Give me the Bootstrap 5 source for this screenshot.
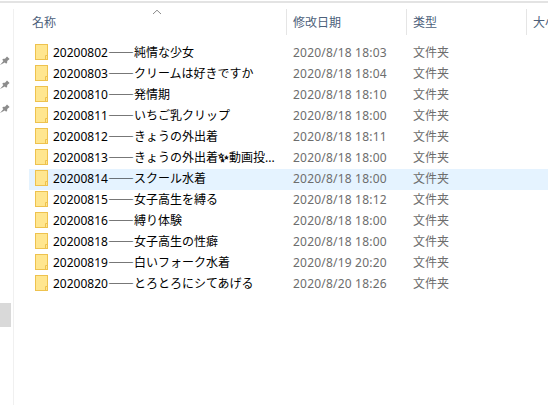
<!DOCTYPE html>
<html lang="ja">
<head>
<meta charset="utf-8">
<link href="https://cdn.jsdelivr.net/npm/bootstrap@5.3.0/dist/css/bootstrap.min.css" rel="stylesheet">
<style>
html,body{margin:0;height:405px;width:548px;overflow:hidden;background:#fff}
body{font-family:"Noto Sans","Noto Sans CJK JP",sans-serif;font-size:12px;line-height:19px;color:#000}
.topline{height:2px;margin-top:1px;background:#e3e3e3}
.shell{height:402px}
.rail{width:14px;border-right:1px solid #f0f0f0;margin-top:6px;flex:none}
.pins{width:13px;padding-top:46px;gap:14px}
.pins svg{width:10px;height:10px;display:block}
.thumb{width:11px;height:24px;background:#d9d9d9;margin-top:190px}
.pane{padding-top:6px;min-width:0;overflow:hidden}
.colhead{height:26px;color:#4c607a;padding-left:18px;position:relative}
.caret-up{position:absolute;left:138px;top:0;width:10px;height:6px}
.hname{width:254px;line-height:27px;flex:none}
.hcell{width:120px;border-left:1px solid #e5e5e5;padding-left:6px;line-height:27px;flex:none}
.rows{padding-top:8px;padding-left:15px}
.frow{height:21px;white-space:nowrap}
.frow.sel{background:#e5f3ff}
.fico{width:13px;height:16px;margin-left:6px;margin-top:1px;flex:none}
.fname{width:245px;padding-left:5px;overflow:hidden;flex:none}
.dash{font-family:"Noto Sans CJK JP",sans-serif;font-size:13px;line-height:1;font-weight:700}
.spark{font-family:"DejaVu Sans",sans-serif;font-size:13px;line-height:1;font-weight:700}
.fdate{width:120px;color:#6d6d6d;flex:none;letter-spacing:.2px}
.ftype{color:#6d6d6d;flex:none}
</style>
</head>
<body>
<div class="topline"></div>
<div class="shell d-flex">
  <div class="rail d-flex flex-column">
    <div class="pins d-flex flex-column">
      <svg viewBox="0 0 10 10"><path d="M0 10 3.4 6 2.2 4.8 3.4 3.8 5 3.8 7 1.4 9.6 4 7.2 6 7.2 7.6 6.2 8.8 4.8 7.4Z" fill="#8c8c8c"/></svg>
      <svg viewBox="0 0 10 10"><path d="M0 10 3.4 6 2.2 4.8 3.4 3.8 5 3.8 7 1.4 9.6 4 7.2 6 7.2 7.6 6.2 8.8 4.8 7.4Z" fill="#8c8c8c"/></svg>
      <svg viewBox="0 0 10 10"><path d="M0 10 3.4 6 2.2 4.8 3.4 3.8 5 3.8 7 1.4 9.6 4 7.2 6 7.2 7.6 6.2 8.8 4.8 7.4Z" fill="#8c8c8c"/></svg>
    </div>
    <div class="thumb"></div>
  </div>
  <div class="pane flex-grow-1">
    <div class="colhead d-flex">
      <svg class="caret-up" viewBox="0 0 10 6"><path d="M1 5 5 1.2 9 5" fill="none" stroke="#8a8a8a"/></svg>
      <div class="hname">名称</div>
      <div class="hcell">修改日期</div>
      <div class="hcell">类型</div>
      <div class="hcell">大小</div>
    </div>
    <div class="rows">
      <div class="frow d-flex"><svg class="fico" viewBox="0 0 13 16"><rect x=".5" y=".5" width="12" height="15" fill="#ffe68f" stroke="#eec24e"/><path d="M10.5 15.5v-4h2" fill="none" stroke="#eec24e"/></svg><div class="fname">20200802<span class="dash">——</span>純情な少女</div><div class="fdate">2020/8/18 18:03</div><div class="ftype">文件夹</div></div>
      <div class="frow d-flex"><svg class="fico" viewBox="0 0 13 16"><rect x=".5" y=".5" width="12" height="15" fill="#ffe68f" stroke="#eec24e"/><path d="M10.5 15.5v-4h2" fill="none" stroke="#eec24e"/></svg><div class="fname">20200803<span class="dash">——</span>クリームは好きですか</div><div class="fdate">2020/8/18 18:04</div><div class="ftype">文件夹</div></div>
      <div class="frow d-flex"><svg class="fico" viewBox="0 0 13 16"><rect x=".5" y=".5" width="12" height="15" fill="#ffe68f" stroke="#eec24e"/><path d="M10.5 15.5v-4h2" fill="none" stroke="#eec24e"/></svg><div class="fname">20200810<span class="dash">——</span>発情期</div><div class="fdate">2020/8/18 18:10</div><div class="ftype">文件夹</div></div>
      <div class="frow d-flex"><svg class="fico" viewBox="0 0 13 16"><rect x=".5" y=".5" width="12" height="15" fill="#ffe68f" stroke="#eec24e"/><path d="M10.5 15.5v-4h2" fill="none" stroke="#eec24e"/></svg><div class="fname">20200811<span class="dash">——</span>いちご乳クリップ</div><div class="fdate">2020/8/18 18:00</div><div class="ftype">文件夹</div></div>
      <div class="frow d-flex"><svg class="fico" viewBox="0 0 13 16"><rect x=".5" y=".5" width="12" height="15" fill="#ffe68f" stroke="#eec24e"/><path d="M10.5 15.5v-4h2" fill="none" stroke="#eec24e"/></svg><div class="fname">20200812<span class="dash">——</span>きょうの外出着</div><div class="fdate">2020/8/18 18:11</div><div class="ftype">文件夹</div></div>
      <div class="frow d-flex"><svg class="fico" viewBox="0 0 13 16"><rect x=".5" y=".5" width="12" height="15" fill="#ffe68f" stroke="#eec24e"/><path d="M10.5 15.5v-4h2" fill="none" stroke="#eec24e"/></svg><div class="fname">20200813<span class="dash">——</span>きょうの外出着<span class="spark">✨&#xFE0E;</span>動画投...</div><div class="fdate">2020/8/18 18:00</div><div class="ftype">文件夹</div></div>
      <div class="frow sel d-flex"><svg class="fico" viewBox="0 0 13 16"><rect x=".5" y=".5" width="12" height="15" fill="#ffe68f" stroke="#eec24e"/><path d="M10.5 15.5v-4h2" fill="none" stroke="#eec24e"/></svg><div class="fname">20200814<span class="dash">——</span>スクール水着</div><div class="fdate">2020/8/18 18:00</div><div class="ftype">文件夹</div></div>
      <div class="frow d-flex"><svg class="fico" viewBox="0 0 13 16"><rect x=".5" y=".5" width="12" height="15" fill="#ffe68f" stroke="#eec24e"/><path d="M10.5 15.5v-4h2" fill="none" stroke="#eec24e"/></svg><div class="fname">20200815<span class="dash">——</span>女子高生を縛る</div><div class="fdate">2020/8/18 18:12</div><div class="ftype">文件夹</div></div>
      <div class="frow d-flex"><svg class="fico" viewBox="0 0 13 16"><rect x=".5" y=".5" width="12" height="15" fill="#ffe68f" stroke="#eec24e"/><path d="M10.5 15.5v-4h2" fill="none" stroke="#eec24e"/></svg><div class="fname">20200816<span class="dash">——</span>縛り体験</div><div class="fdate">2020/8/18 18:00</div><div class="ftype">文件夹</div></div>
      <div class="frow d-flex"><svg class="fico" viewBox="0 0 13 16"><rect x=".5" y=".5" width="12" height="15" fill="#ffe68f" stroke="#eec24e"/><path d="M10.5 15.5v-4h2" fill="none" stroke="#eec24e"/></svg><div class="fname">20200818<span class="dash">——</span>女子高生の性癖</div><div class="fdate">2020/8/18 18:00</div><div class="ftype">文件夹</div></div>
      <div class="frow d-flex"><svg class="fico" viewBox="0 0 13 16"><rect x=".5" y=".5" width="12" height="15" fill="#ffe68f" stroke="#eec24e"/><path d="M10.5 15.5v-4h2" fill="none" stroke="#eec24e"/></svg><div class="fname">20200819<span class="dash">——</span>白いフォーク水着</div><div class="fdate">2020/8/19 20:20</div><div class="ftype">文件夹</div></div>
      <div class="frow d-flex"><svg class="fico" viewBox="0 0 13 16"><rect x=".5" y=".5" width="12" height="15" fill="#ffe68f" stroke="#eec24e"/><path d="M10.5 15.5v-4h2" fill="none" stroke="#eec24e"/></svg><div class="fname">20200820<span class="dash">——</span>とろとろにシてあげる</div><div class="fdate">2020/8/20 18:26</div><div class="ftype">文件夹</div></div>
    </div>
  </div>
</div>
</body>
</html>
